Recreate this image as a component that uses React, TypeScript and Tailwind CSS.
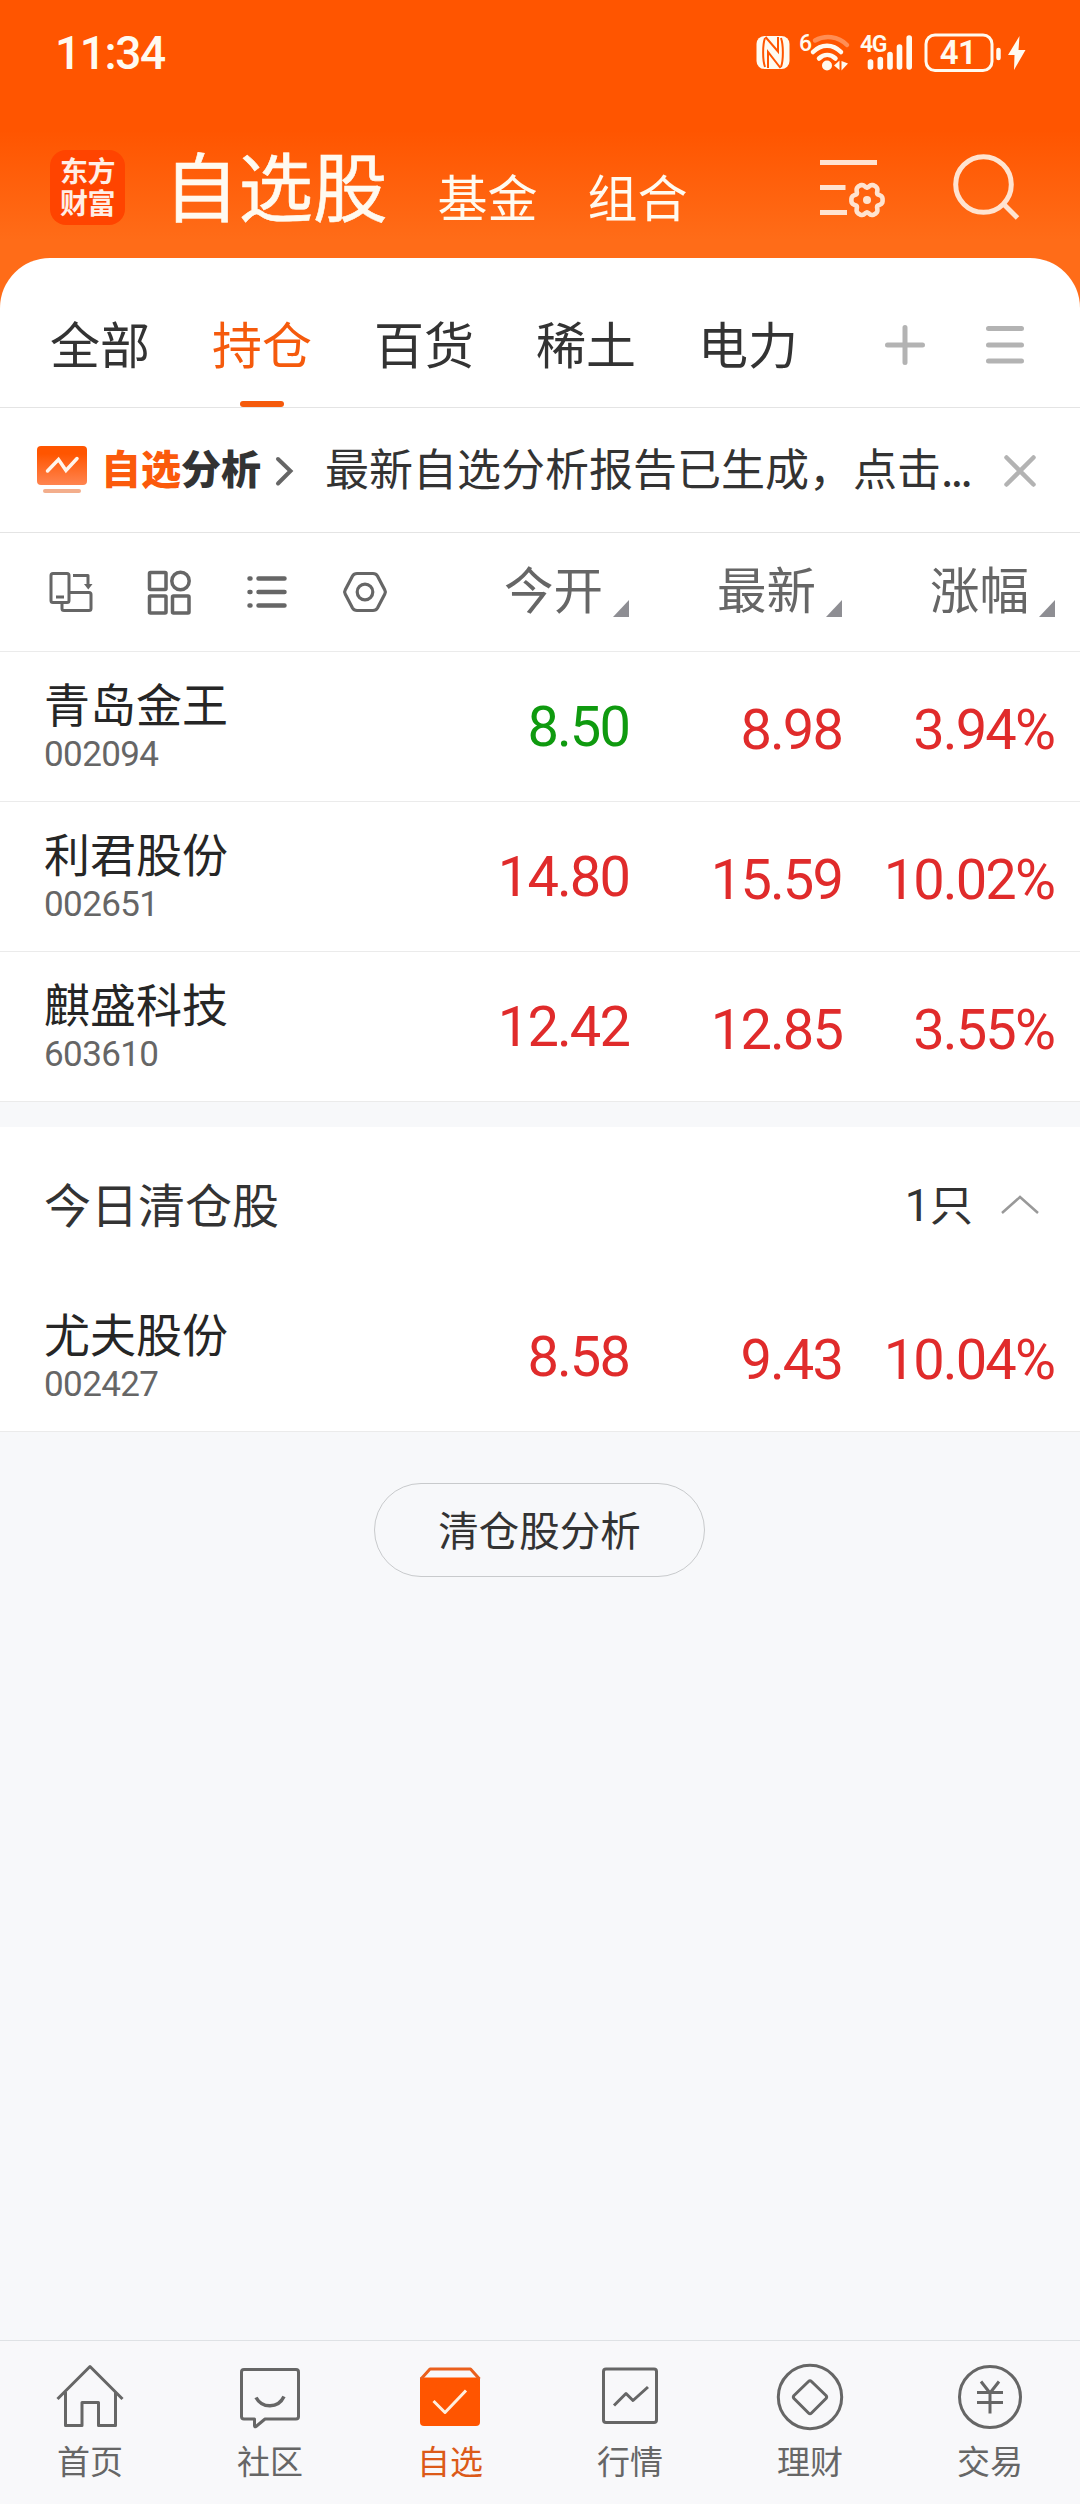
import React from "react";

const CJK = "font-['Noto_Sans_CJK_SC',sans-serif]";

const groups = ["全部", "持仓", "百货", "稀土", "电力"];
const columns = ["今开", "最新", "涨幅"];

type Stock = {
    name: string;
    code: string;
    open: string;
    last: string;
    change: string;
    openDown?: boolean;
};

const holdings: Stock[] = [
    { name: "青岛金王", code: "002094", open: "8.50", last: "8.98", change: "3.94%", openDown: true },
    { name: "利君股份", code: "002651", open: "14.80", last: "15.59", change: "10.02%" },
    { name: "麒盛科技", code: "603610", open: "12.42", last: "12.85", change: "3.55%" },
];

const cleared: Stock = { name: "尤夫股份", code: "002427", open: "8.58", last: "9.43", change: "10.04%" };

// six-lobed outline for the settings gear, stretched a little at the diagonal lobes
const gearPoints = Array.from({ length: 72 }, (_, i) => {
    const a = (i / 72) * Math.PI * 2;
    const r = 14.2 + 1.9 * Math.cos(6 * a) - 0.5 * Math.cos(12 * a);
    return `${(48 + r * Math.cos(a)).toFixed(2)},${(44 + r * 1.04 * Math.sin(a)).toFixed(2)}`;
}).join(" ");

const StatusBar = () => {
    return (
        <div className="flex h-[104px] items-center pl-[55px] pr-[54px] font-[Roboto,sans-serif] text-[#fffaf0]">
            <span className="mt-[2px] text-[46px] font-medium leading-none tracking-[-1.400px]">11:34</span>
            <div className="ml-auto flex items-center">
                <svg width="34" height="42" viewBox="0 0 34 42" className="mr-[9px]">
                    <rect x="0.5" y="5" width="33" height="33" rx="8" fill="currentColor" />
                    <g stroke="#ff5500" strokeWidth="2" fill="none">
                        <path d="M9 7C6.500 14 6.500 29 9 36M25 7C27.500 14 27.500 29 25 36" />
                        <path d="M9.500 6L22 20.500V6M12 37V21L24.500 37" />
                    </g>
                </svg>
                <div className="relative mr-[8px] h-[42px] w-[52px]">
                    <span className="absolute left-0 top-[1px] text-[23px] font-medium leading-none">6</span>
                    <svg width="52" height="42" viewBox="0 0 52 42" fill="none" stroke="currentColor" strokeWidth="4.500" strokeLinecap="round">
                        <path d="M16 9.500C26 4 39 5 48 14" opacity="0.35" />
                        <path d="M14 21C22 12.500 34 12.500 42 21" />
                        <path d="M20 27.500C25 22.800 31.500 22.800 36.500 27.500" />
                        <circle cx="28" cy="34.500" r="5" fill="currentColor" stroke="none" />
                        <path d="M35 34.500L40.500 29.500V39ZM42.500 30V39.500L49 32.500Z" fill="currentColor" stroke="none" />
                    </svg>
                </div>
                <div className="relative mr-[11px] h-[42px] w-[54px]">
                    <span className="absolute left-[1px] top-[2px] text-[23px] font-semibold leading-none tracking-[-1.500px]">4G</span>
                    <svg width="54" height="42" viewBox="0 0 54 42" stroke="currentColor" strokeWidth="5.600" strokeLinecap="round">
                        <path d="M11.500 31V36M21.300 28.500V36M31 23.500V36M40.500 16V36M50.200 7V36" />
                    </svg>
                </div>
                <div className="relative h-[42px] w-[78px]">
                    <span className="absolute left-0 top-0 w-[68px] text-center text-[33px] font-semibold leading-[43px] tracking-[-0.500px]">41</span>
                    <svg width="78" height="42" viewBox="0 0 78 42" fill="none" stroke="currentColor">
                        <rect x="2" y="4" width="66" height="35.500" rx="9" strokeWidth="3" />
                        <path d="M74.500 19V27" strokeWidth="4.500" strokeLinecap="round" />
                    </svg>
                </div>
                <svg width="19" height="42" viewBox="0 0 19 42" className="ml-[5px]">
                    <path d="M12.500 5L1 24H7.500L7 39L18.500 19H11.500Z" fill="currentColor" />
                </svg>
            </div>
        </div>
    );
};

const TitleBar = () => {
    return (
        <div className="flex h-[154px] pl-[50px] pr-[56px] text-[#fffaf0]">
            <div className="mt-[46px] flex size-[75px] items-center justify-center rounded-[16px] bg-[#ff4400] pb-[3px] text-center text-[28px] font-bold leading-[32px] tracking-[-0.500px] text-[#ffeee6]">
                东方
                <br />
                财富
            </div>
            <h1 className="ml-[39px] mt-[39px] text-[74.500px] leading-[82px] [-webkit-text-stroke:0.6px_#fffaf0]">自选股</h1>
            <span className="ml-[50px] mt-[61px] text-[50px] leading-[60px]">基金</span>
            <span className="ml-[50px] mt-[61px] text-[50px] leading-[60px]">组合</span>
            <svg width="72" height="72" viewBox="0 0 72 72" className="ml-auto mt-[52px]" fill="none" stroke="#ffe3d0" strokeWidth="5">
                <path d="M1 6.500H58M1 31.500H26.500M1 56.500H28" />
                <polygon points={gearPoints} strokeWidth="4.600" strokeLinejoin="round" />
                <circle cx="48" cy="44" r="4" fill="#ffe3d0" stroke="none" />
            </svg>
            <svg width="72" height="72" viewBox="0 0 72 72" className="ml-[61px] mt-[46px]" fill="none" stroke="#ffe3d0" strokeWidth="5">
                <circle cx="31.500" cy="34.500" r="27.800" />
                <path d="M51 53.500L65.500 68" />
            </svg>
        </div>
    );
};

const GroupTabs = () => {
    return (
        <div className="flex h-[150px] rounded-t-[50px] border-b border-[#e4e4e4] bg-white pl-[50px]">
            {groups.map((g) => (
                <div
                    key={g}
                    className={
                        g === "持仓"
                            ? "mr-[62px] flex flex-col items-center text-[#f55a0c]"
                            : "mr-[62px] flex flex-col items-center text-[#333333]"
                    }
                >
                    <span className="mt-[54px] text-[50px] leading-[60px]">{g}</span>
                    {g === "持仓" && <span className="mt-[29px] h-[6px] w-[44px] rounded-full bg-[#f55a0c]" />}
                </div>
            ))}
            <svg width="42" height="42" viewBox="0 0 42 42" className="ml-[24px] mt-[66px]" stroke="#b3b3b3" strokeWidth="5" strokeLinecap="round">
                <path d="M3.500 21H38.500M21 3.500V38.500" />
            </svg>
            <svg width="42" height="42" viewBox="0 0 42 42" className="ml-[58px] mt-[66px]" stroke="#b3b3b3" strokeWidth="5" strokeLinecap="round">
                <path d="M4.500 4.500H37.500M4.500 21H37.500M4.500 37H37.500" />
            </svg>
        </div>
    );
};

const AnalysisBanner = () => {
    return (
        <div className="flex h-[125px] items-center border-b border-[#e4e4e4] bg-white pl-[36px] text-[#333333]">
            <svg width="52" height="52" viewBox="0 0 52 52">
                <defs>
                    <linearGradient id="badge" x1="0" y1="0" x2="0" y2="1">
                        <stop offset="0.2" stopColor="#ff5500" />
                        <stop offset="1" stopColor="#ff8450" />
                    </linearGradient>
                </defs>
                <rect x="1" y="2" width="50" height="39" rx="4" fill="url(#badge)" />
                <rect x="7" y="45" width="38" height="4" rx="2" fill="#f3ae8c" />
                <path d="M11.500 27L22.500 15.500L30 26.500L41 14.500" fill="none" stroke="#fff5ec" strokeWidth="3.500" strokeLinecap="round" />
            </svg>
            <span className="mb-[6px] ml-[13px] text-[40px] font-black leading-[60px]">
                <span className="text-[#fb5a0c]">自选</span>
                <span>分析</span>
            </span>
            <svg width="20" height="32" viewBox="0 0 20 32" className="ml-[14px] mt-[1px]" fill="none" stroke="#666666" strokeWidth="4" strokeLinecap="round">
                <path d="M3 4L15.500 16L3 28.500" />
            </svg>
            <span className="mb-[6px] ml-[30px] whitespace-nowrap text-[44px] leading-[60px]">
                最新自选分析报告已生成，点击<span className="tracking-[-2.500px]">...</span>
            </span>
            <svg width="34" height="34" viewBox="0 0 34 34" className="ml-auto mr-[43px] mt-[2px]" stroke="#b3b3b3" strokeWidth="4.500" strokeLinecap="round">
                <path d="M3.500 3.500L30.500 30.500M30.500 3.500L3.500 30.500" />
            </svg>
        </div>
    );
};

const TableHead = () => {
    return (
        <div className="flex h-[119px] items-center border-b border-[#ebebeb] bg-white pl-[47px] pr-[25px]">
            <div className="flex gap-[50px]">
                <svg width="48" height="48" viewBox="0 0 48 48" fill="none" stroke="#666666" strokeWidth="3" strokeLinejoin="round">
                    <rect x="4" y="5.500" width="18" height="29" rx="2" />
                    <path d="M9 29H17M26 7.500H41V18M22 24.500H42Q44 24.500 44 26.500V40.500Q44 42.500 42 42.500H17Q15 42.500 15 40.500V35" />
                    <path d="M37 16H45.500L41.300 21.500Z" fill="#666666" stroke="none" />
                </svg>
                <svg width="48" height="48" viewBox="0 0 48 48" fill="none" stroke="#666666" strokeWidth="3.500">
                    <rect x="4.500" y="4.500" width="16.500" height="17" rx="1" />
                    <circle cx="35.500" cy="13" r="8.700" />
                    <rect x="4.500" y="28" width="16.500" height="17" rx="1" />
                    <rect x="27.500" y="28" width="16.500" height="17" rx="1" />
                </svg>
                <svg width="48" height="48" viewBox="0 0 48 48" stroke="#666666" strokeWidth="4.500" strokeLinecap="round">
                    <path d="M6.500 10.500H7.500M6.500 24H7.500M6.500 37.500H7.500M15.500 10.500H41.500M15.500 24H41.500M15.500 37.500H41.500" />
                </svg>
                <svg width="48" height="48" viewBox="0 0 48 48" fill="none" stroke="#666666" strokeWidth="3.200">
                    <path d="M16 5.500H32Q35 5.500 36.500 8L43.800 22Q45 24 43.800 26L36.500 40Q35 42.500 32 42.500H16Q13 42.500 11.500 40L4.200 26Q3 24 4.200 22L11.500 8Q13 5.500 16 5.500Z" />
                    <circle cx="24" cy="24" r="7.800" />
                </svg>
            </div>
            <div className="ml-auto flex">
                {columns.map((c) => (
                    <div key={c} className="flex w-[213px] items-end justify-end text-[49.500px] leading-[60px] text-[#666666]">
                        <span className="mb-[8px]">{c}</span>
                        <svg width="16" height="17" viewBox="0 0 16 17" className="mb-[9px] ml-[10px]">
                            <path d="M16 0V17H0Z" fill="#8e8e93" />
                        </svg>
                    </div>
                ))}
            </div>
        </div>
    );
};

const StockRow = ({ stock }: { stock: Stock }) => {
    return (
        <div className="flex h-[150px] border-b border-[#ebebeb] bg-white pl-[44px] pr-[25px]">
            <div className="flex flex-col">
                <span className="mt-[23px] text-[46px] leading-[54px] text-[#262626]">{stock.name}</span>
                <span className="mt-[8px] font-[Roboto,sans-serif] text-[35px] leading-[36px] tracking-[-0.600px] text-[#666666]">{stock.code}</span>
            </div>
            <div className="ml-auto flex font-[Roboto,sans-serif] text-[56px] leading-[60px] tracking-[-1.900px] text-[#e02b2b]">
                <span className={stock.openDown ? "mt-[45px] w-[213px] text-right text-[#0f9a0f]" : "mt-[45px] w-[213px] text-right"}>
                    {stock.open}
                </span>
                <span className="mt-[48px] w-[213px] text-right">{stock.last}</span>
                <span className="mt-[48px] w-[213px] pr-[1px] text-right">{stock.change}</span>
            </div>
        </div>
    );
};

const navIcons = {
    home: (
        <path d="M3.500 38L36 5.500L68.500 38M11.500 31V64.500H28V41.500H44.500V64.500H61.500V31" />
    ),
    community: (
        <>
            <path d="M10 8.500H62Q64.500 8.500 64.500 11V55.500Q64.500 58 62 58H31L22 65.500Q20.500 66.500 20.500 64.500V58H10Q7.500 58 7.500 55.500V11Q7.500 8.500 10 8.500Z" />
            <path d="M22 36.500C28 47.500 44 48 50 35.500" strokeWidth="3.500" />
        </>
    ),
    watch: (
        <>
            <path d="M6 16.500H66V61Q66 65 62 65H10Q6 65 6 61Z" fill="#ff5500" stroke="none" />
            <path d="M7 18L16 8H56.500L65.500 18" stroke="#ea5f1c" />
            <path d="M19.500 40L31 51.500L52 29.500" stroke="#ffeedd" />
        </>
    ),
    market: (
        <>
            <rect x="9.500" y="8" width="53" height="53.500" rx="2.500" />
            <path d="M20 44.500L32 32.500L39 39.500L54 26" />
        </>
    ),
    wealth: (
        <>
            <circle cx="36" cy="36" r="31.700" />
            <path d="M34.500 20.500Q36 19 37.500 20.500L52 34.500Q53.300 36 52 37.500L37.500 52Q36 53.500 34.500 52L20 37.500Q18.700 36 20 34.500Z" />
        </>
    ),
    trade: (
        <>
            <circle cx="36" cy="36" r="30.500" />
            <path d="M27 20.500L36 32L45 20.500M23 31.500H49M23 41.500H49M36 32V52.500" />
        </>
    ),
};

const navItems: { key: keyof typeof navIcons; label: string }[] = [
    { key: "home", label: "首页" },
    { key: "community", label: "社区" },
    { key: "watch", label: "自选" },
    { key: "market", label: "行情" },
    { key: "wealth", label: "理财" },
    { key: "trade", label: "交易" },
];

const BottomNav = () => {
    return (
        <nav className="mt-auto grid h-[164px] grid-cols-6 border-t border-[#dfe2e5] bg-[#f8f8fa]">
            {navItems.map((item) => (
                <div
                    key={item.key}
                    className={item.key === "watch" ? "flex flex-col items-center text-[#dc5a18]" : "flex flex-col items-center text-[#666666]"}
                >
                    <svg width="72" height="72" viewBox="0 0 72 72" className="mt-[20px]" fill="none" stroke="#666666" strokeWidth="3" strokeLinejoin="round">
                        {navIcons[item.key]}
                    </svg>
                    <span className="mt-[6px] text-[33px] leading-[42px]">{item.label}</span>
                </div>
            ))}
        </nav>
    );
};

const App = () => {
    return (
        <div className={`flex h-[2504px] w-[1080px] flex-col overflow-hidden bg-[#f7f8fa] ${CJK}`}>
            <header className="bg-[linear-gradient(to_bottom,#ff5500_130px,#ff6c18_240px)]">
                <StatusBar />
                <TitleBar />
                <GroupTabs />
            </header>
            <AnalysisBanner />
            <TableHead />
            {holdings.map((s) => (
                <StockRow key={s.code} stock={s} />
            ))}
            <div className="mt-[25px] flex h-[155px] items-center bg-white pl-[44px] pr-[40px] text-[#333333]">
                <span className="mb-[4px] text-[47px] leading-[60px]">今日清仓股</span>
                <span className="ml-auto mt-[2px] font-[Roboto,sans-serif] text-[45px] leading-[60px]">1</span>
                <span className="mb-[5px] text-[43px] leading-[60px]">只</span>
                <svg width="40" height="20" viewBox="0 0 40 20" className="ml-[27px]" fill="none" stroke="#999999" strokeWidth="2.500">
                    <path d="M2 18L20 2L38 18" />
                </svg>
            </div>
            <StockRow stock={cleared} />
            <button className="ml-[374px] mt-[51px] h-[94px] w-[331px] rounded-full border border-[#c8cacc] pb-[2px] text-[40.500px] leading-[60px] text-[#333333]">
                清仓股分析
            </button>
            <BottomNav />
        </div>
    );
};

export default App;
